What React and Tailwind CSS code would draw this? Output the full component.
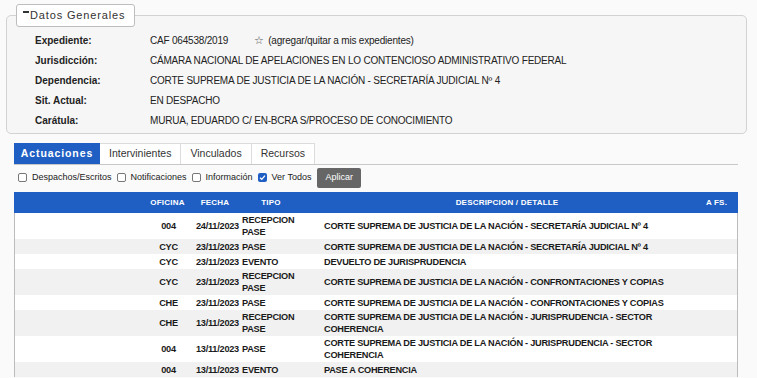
import { useState } from "react";

const datos = [
  { label: "Expediente:", value: "CAF 064538/2019", fav: true },
  { label: "Jurisdicción:", value: "CÁMARA NACIONAL DE APELACIONES EN LO CONTENCIOSO ADMINISTRATIVO FEDERAL" },
  { label: "Dependencia:", value: "CORTE SUPREMA DE JUSTICIA DE LA NACIÓN - SECRETARÍA JUDICIAL Nº 4" },
  { label: "Sit. Actual:", value: "EN DESPACHO" },
  { label: "Carátula:", value: "MURUA, EDUARDO C/ EN-BCRA S/PROCESO DE CONOCIMIENTO" },
];

const actuaciones = [
  { of: "004", fecha: "24/11/2023", tipo: ["RECEPCION", "PASE"], desc: ["CORTE SUPREMA DE JUSTICIA DE LA NACIÓN - SECRETARÍA JUDICIAL Nº 4"] },
  { of: "CYC", fecha: "23/11/2023", tipo: ["PASE"], desc: ["CORTE SUPREMA DE JUSTICIA DE LA NACIÓN - SECRETARÍA JUDICIAL Nº 4"] },
  { of: "CYC", fecha: "23/11/2023", tipo: ["EVENTO"], desc: ["DEVUELTO DE JURISPRUDENCIA"] },
  { of: "CYC", fecha: "23/11/2023", tipo: ["RECEPCION", "PASE"], desc: ["CORTE SUPREMA DE JUSTICIA DE LA NACIÓN - CONFRONTACIONES Y COPIAS"] },
  { of: "CHE", fecha: "23/11/2023", tipo: ["PASE"], desc: ["CORTE SUPREMA DE JUSTICIA DE LA NACIÓN - CONFRONTACIONES Y COPIAS"] },
  { of: "CHE", fecha: "13/11/2023", tipo: ["RECEPCION", "PASE"], desc: ["CORTE SUPREMA DE JUSTICIA DE LA NACIÓN - JURISPRUDENCIA - SECTOR", "COHERENCIA"] },
  { of: "004", fecha: "13/11/2023", tipo: ["PASE"], desc: ["CORTE SUPREMA DE JUSTICIA DE LA NACIÓN - JURISPRUDENCIA - SECTOR", "COHERENCIA"] },
  { of: "004", fecha: "13/11/2023", tipo: ["EVENTO"], desc: ["PASE A COHERENCIA"] },
];

const tabs = ["Actuaciones", "Intervinientes", "Vinculados", "Recursos"];

const filtros = [
  { label: "Despachos/Escritos", checked: false },
  { label: "Notificaciones", checked: false },
  { label: "Información", checked: false },
  { label: "Ver Todos", checked: true },
];

const Check = ({ checked }) =>
  checked ? (
    <span className="w-[9px] h-[9px] rounded-[2px] bg-[#1f5fc4] flex items-center justify-center">
      <svg width="7" height="7" viewBox="0 0 8 8">
        <path d="M1.2 4.2 L3.2 6.1 L6.8 1.8" fill="none" stroke="white" strokeWidth="1.5" />
      </svg>
    </span>
  ) : (
    <span className="w-[9px] h-[9px] rounded-[2px] border border-[#777] bg-white" />
  );

const App = () => {
  const [tab, setTab] = useState(0);
  const grid = "grid grid-cols-[131px_45px_50px_62px_17px_376px_1fr]";

  return (
    <div className="w-[757px] h-[378px] overflow-hidden bg-[#fafafa] pt-[4px] text-[#222] font-['Liberation_Sans',Arial,sans-serif]">
      <fieldset className="ml-[6px] w-[741px] border border-[#d2d2d2] rounded-[5px] bg-[#f6f6f6] pl-[28px] pb-[3px]">
        <legend className="-ml-[19px] h-[23px] pl-[6px] pr-[9px] border border-[#bdbdbd] rounded-[3px] bg-white text-[11px] tracking-[0.85px] text-[#333] flex items-center">
          <span className="self-start mt-[6px] mr-[1px] w-[6px] h-[2px] bg-[#333]" />
          Datos Generales
        </legend>
        <div className="pt-[3px]">
          {datos.map((d) => (
            <div key={d.label} className="h-[20px] flex items-center">
              <span className="w-[115px] font-bold text-[10px]">{d.label}</span>
              <span className="text-[10px] tracking-[-0.2px]">{d.value}</span>
              {d.fav && (
                <>
                  <span className="ml-[26px] text-[11px] text-[#555]">☆</span>
                  <span className="ml-[4px] text-[10px] tracking-[-0.2px]">(agregar/quitar a mis expedientes)</span>
                </>
              )}
            </div>
          ))}
        </div>
      </fieldset>

      <div className="mx-[14px] w-[724px] mt-[9px]">
        <div className="flex border-b border-[#c8c8c8] h-[22px]">
          {tabs.map((t, i) => (
            <button
              key={t}
              onClick={() => setTab(i)}
              className={
                i === tab
                  ? "h-[21px] w-[86px] bg-[#1f5fc4] text-white font-bold text-[10.5px] tracking-[0.9px]"
                  : "h-[21px] px-[9px] bg-white border-t border-r border-[#dcdcdc] text-[#333] text-[10.5px]"
              }
            >
              {t}
            </button>
          ))}
        </div>

        <div className="flex items-center h-[25px] pl-[4px] text-[9px] text-[#222]">
          {filtros.map((f) => (
            <label key={f.label} className="flex items-center mr-[5px]">
              <Check checked={f.checked} />
              <span className="ml-[5px]">{f.label}</span>
            </label>
          ))}
          <button className="ml-[1px] h-[20px] px-[8px] rounded-[2px] bg-[#666] text-white text-[9px]">Aplicar</button>
        </div>

        <div className={`${grid} h-[21px] mt-[2px] items-center bg-[#1f5fc4] text-white font-bold text-[8px] tracking-[0.2px]`}>
          <span />
          <span className="text-center">OFICINA</span>
          <span className="text-center">FECHA</span>
          <span className="text-center">TIPO</span>
          <span />
          <span className="text-center">DESCRIPCION / DETALLE</span>
          <span className="text-center">A FS.</span>
        </div>

        <div className="border-x border-[#bcbcbc] font-bold text-[9.2px] tracking-[-0.25px] text-[#1a1a1a]">
          {actuaciones.map((a, i) => (
            <div
              key={i}
              className={`${grid} items-center leading-[12px] ${a.tipo.length > 1 || a.desc.length > 1 ? "h-[26px]" : "h-[15px]"} ${i % 2 ? "bg-[#f1f1f1]" : "bg-white"}`}
            >
              <span />
              <span className="text-center">{a.of}</span>
              <span className="pl-[5px]">{a.fecha}</span>
              <span className="pl-[1px]">
                {a.tipo.map((t) => (
                  <div key={t}>{t}</div>
                ))}
              </span>
              <span />
              <span className="pl-[4px]">
                {a.desc.map((t) => (
                  <div key={t}>{t}</div>
                ))}
              </span>
              <span />
            </div>
          ))}
        </div>
      </div>
    </div>
  );
};

export default App;
